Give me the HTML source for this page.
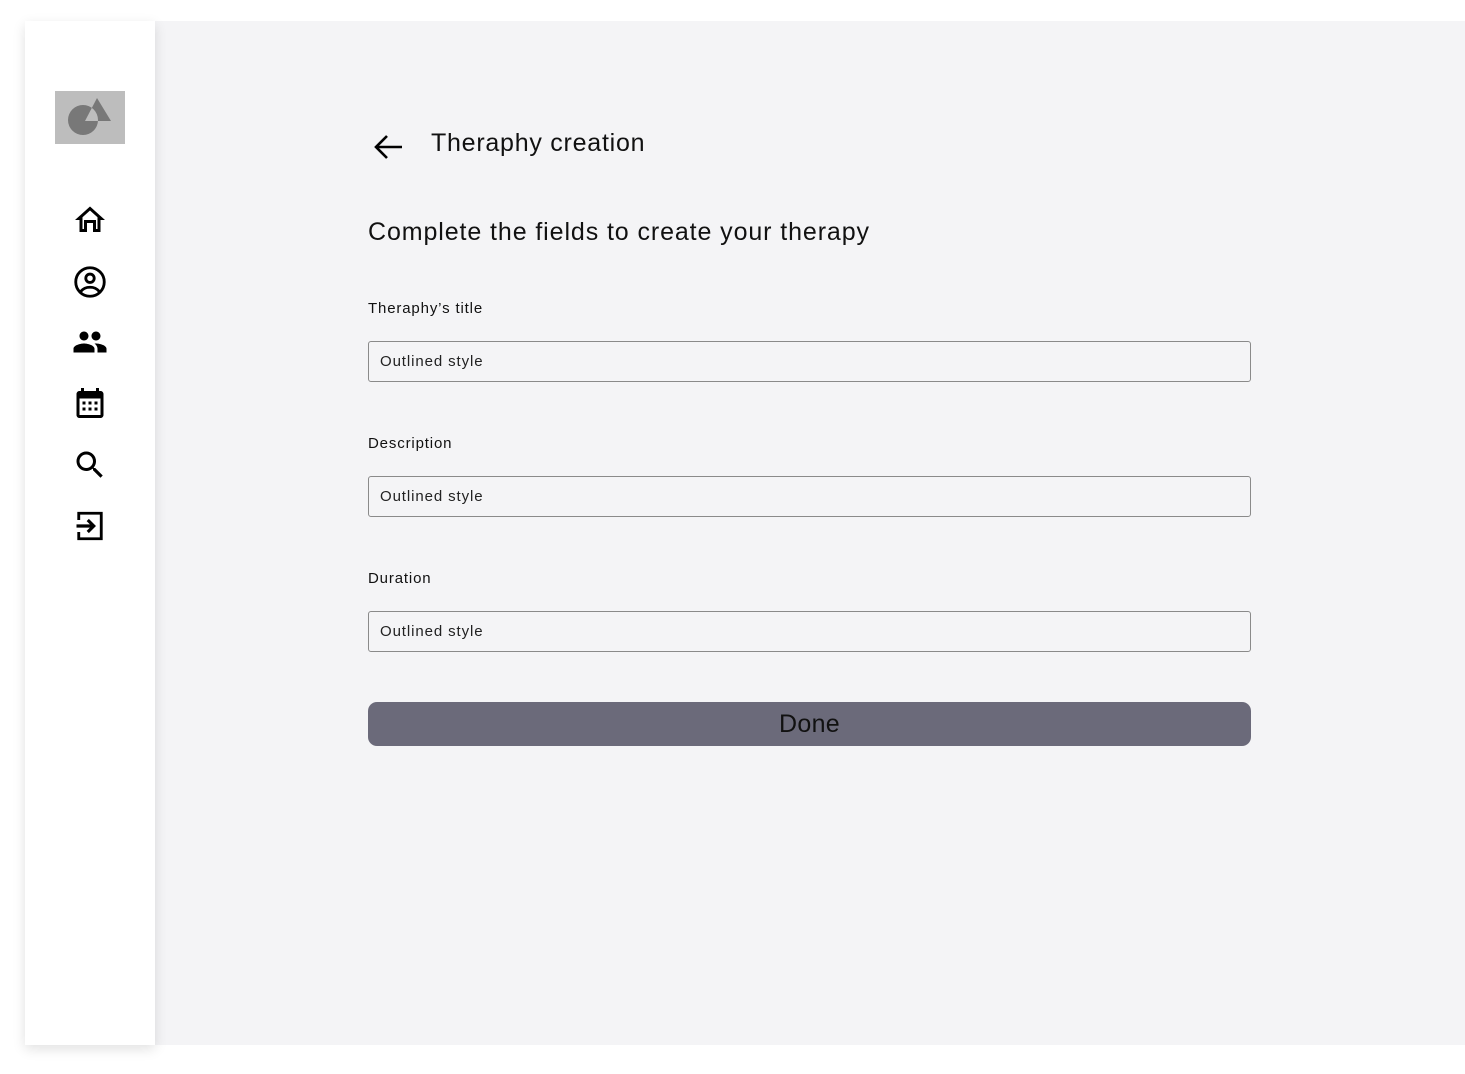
<!DOCTYPE html>
<html><head><meta charset="utf-8"><style>
*{margin:0;padding:0;box-sizing:border-box}
body{width:1465px;height:1074px;background:#fff;font-family:"Liberation Sans",sans-serif;position:relative;overflow:hidden;color:#111}
.main{position:absolute;left:155px;top:21px;width:1310px;height:1024px;background:#f4f4f6}
.side{position:absolute;left:25px;top:21px;width:130px;height:1024px;background:#fff;box-shadow:0 4px 12px rgba(0,0,0,.12)}
.logo{position:absolute;left:30px;top:70px;width:70px;height:53px;background:#bdbdbd}
.ic{position:absolute;left:47px;width:36px;height:36px}
.t{position:absolute;white-space:nowrap}
.lbl{font-size:15px;letter-spacing:.85px}
.in{position:absolute;left:368px;width:883px;height:41px;border:1px solid #8a8a8a;border-radius:3px;font-size:15px;letter-spacing:.9px;padding:11px 0 0 11px;color:#222}
.btn{position:absolute;left:368px;top:702px;width:883px;height:44px;background:#6b6a7a;border-radius:9px;text-align:center;font-size:25px;line-height:45px;color:#111;letter-spacing:.3px}
</style></head><body>
<div class="main"></div>
<div class="side">
 <div class="logo"><svg width="70" height="53" viewBox="0 0 70 53"><path fill-rule="evenodd" d="M13 29a15 15 0 1 0 30 0a15 15 0 1 0 -30 0z M42 7 L56 30 L30 30 Z" fill="#787878"/></svg></div>
 <svg class="ic" style="top:181px" viewBox="0 0 24 24"><path d="M12 3L2 12h3v8h5v-6h4v6h5v-8h3L12 3zm5 15h-1v-6H8v6H7v-7.8l5-4.5 5 4.5V18z" fill="#000"/></svg>
 <svg class="ic" style="top:243px" viewBox="0 0 24 24"><circle cx="12" cy="12" r="9.5" fill="none" stroke="#000" stroke-width="1.9"/><circle cx="12" cy="9.5" r="2.8" fill="none" stroke="#000" stroke-width="1.9"/><path d="M5.8 18.3c2-2.3 3.8-2.8 6.2-2.8s4.2.5 6.2 2.8" fill="none" stroke="#000" stroke-width="1.9"/></svg>
 <svg class="ic" style="top:303px" viewBox="0 0 24 24"><path d="M16 11c1.66 0 2.99-1.34 2.99-3S17.66 5 16 5c-1.66 0-3 1.34-3 3s1.34 3 3 3zm-8 0c1.66 0 2.99-1.34 2.99-3S9.66 5 8 5C6.34 5 5 6.34 5 8s1.34 3 3 3zm0 2c-2.33 0-7 1.17-7 3.5V19h14v-2.5c0-2.33-4.67-3.5-7-3.5zm8 0c-.29 0-.62.02-.97.05 1.16.84 1.97 1.970 1.97 3.45V19h6v-2.5c0-2.33-4.67-3.5-7-3.5z" fill="#000"/></svg>
 <svg class="ic" style="top:364px" viewBox="0 0 24 24"><path d="M19 4h-1V2h-2v2H8V2H6v2H5c-1.1 0-2 .9-2 2v14c0 1.1.9 2 2 2h14c1.1 0 2-.9 2-2V6c0-1.1-.9-2-2-2zm0 16H5V9h14v11z" fill="#000"/><g fill="#000"><rect x="7" y="11" width="2" height="2"/><rect x="11" y="11" width="2" height="2"/><rect x="15" y="11" width="2" height="2"/><rect x="7" y="15" width="2" height="2"/><rect x="11" y="15" width="2" height="2"/><rect x="15" y="15" width="2" height="2"/></g></svg>
 <svg class="ic" style="top:426px" viewBox="0 0 24 24"><path d="M15.5 14h-.79l-.28-.27A6.47 6.47 0 0016 9.5 6.5 6.5 0 109.5 16c1.61 0 3.09-.59 4.23-1.57l.27.28v.79l5 4.99L20.49 19l-4.99-5zm-6 0C7.01 14 5 11.990 5 9.5S7.01 5 9.5 5 14 7.01 14 9.5 11.99 14 9.5 14z" fill="#000"/></svg>
 <svg class="ic" style="top:487px" viewBox="0 0 24 24"><path d="M4.5 8V3.5h15v17h-15V16" fill="none" stroke="#000" stroke-width="1.9"/><path d="M3 12h11M10.5 8l4 4-4 4" fill="none" stroke="#000" stroke-width="2.1"/></svg>
</div>
<svg style="position:absolute;left:372px;top:132px" width="32" height="30" viewBox="0 0 32 30"><path d="M30 15H4M15 4L4 15l11 11" fill="none" stroke="#000" stroke-width="2.6"/></svg>
<div class="t" style="left:431px;top:129px;font-size:25px;letter-spacing:.75px">Theraphy creation</div>
<div class="t" style="left:368px;top:218px;font-size:25px;letter-spacing:.9px">Complete the fields to create your therapy</div>
<div class="t lbl" style="left:368px;top:300px">Theraphy’s title</div>
<div class="in" style="top:341px">Outlined style</div>
<div class="t lbl" style="left:368px;top:435px">Description</div>
<div class="in" style="top:476px">Outlined style</div>
<div class="t lbl" style="left:368px;top:570px">Duration</div>
<div class="in" style="top:611px">Outlined style</div>
<div class="btn">Done</div>
</body></html>
